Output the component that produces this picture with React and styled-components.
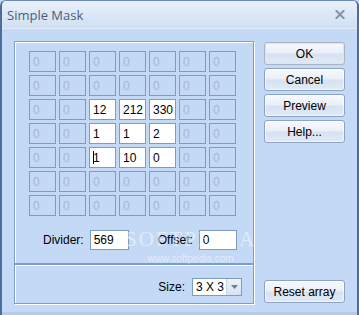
import React from 'react';
import styled, { createGlobalStyle } from 'styled-components';

const GlobalStyle = createGlobalStyle`
  html, body {
    margin: 0;
    padding: 0;
    background: #c3d9f6;
    font-family: "Liberation Sans", Arial, sans-serif;
  }
`;

const Window = styled.div`
  position: relative;
  width: 359px;
  height: 315px;
  box-sizing: border-box;
  background: #c3d9f6;
  border-left: 2px solid #4d6d9c;
  border-right: 2px solid #4d6d9c;
  border-top: 1px solid #6d8bb6;
  border-radius: 6px 6px 0 0;
  overflow: hidden;
  display: flex;
  flex-direction: column;
`;

const TitleBar = styled.div`
  height: 27px;
  flex: none;
  display: flex;
  align-items: center;
  justify-content: space-between;
  padding: 0 12px 0 5px;
  background: linear-gradient(#eaf1fa, #dde8f7 45%, #d1e0f4);
  border-bottom: 1px solid #e2ecf9;
`;

const Title = styled.span`
  font-family: "Open Sans", "Noto Sans", sans-serif;
  font-size: 13px;
  color: #4a5d78;
  padding-top: 1px;
`;

const Body = styled.div`
  display: flex;
  padding: 12px 0 8px 12px;
  border-bottom: 3px solid #b5cbe9;
`;

const LeftColumn = styled.div`
  width: 240px;
  display: flex;
  flex-direction: column;
`;

const GroupBox = styled.div`
  box-sizing: border-box;
  height: ${(p) => p.$height}px;
  border: 1px solid #7f9ccb;
  box-shadow: inset 1px 1px 0 #ffffff, 1px 1px 0 #ffffff;
`;

const CellGrid = styled.div`
  display: grid;
  grid-template-columns: repeat(7, 27px);
  grid-auto-rows: 21px;
  column-gap: 3px;
  row-gap: 3px;
  padding: 9px 0 0 14px;
`;

const Cell = styled.div`
  box-sizing: border-box;
  display: flex;
  align-items: center;
  padding-left: 3px;
  font-size: 12px;
  border: 1px solid ${(p) => (p.$active ? '#7f9db9' : '#7b9bd0')};
  background: ${(p) => (p.$active ? '#ffffff' : 'transparent')};
  color: ${(p) => (p.$active ? '#000000' : '#a8b7cc')};
`;

const Caret = styled.span`
  display: inline-block;
  width: 1px;
  height: 13px;
  background: #000;
  margin-right: -1px;
`;

const FieldRow = styled.div`
  display: flex;
  align-items: center;
  padding: 14px 0 0 28px;
`;

const FieldLabel = styled.span`
  font-size: 12px;
  color: #000;
  margin-left: ${(p) => p.$before || 0}px;
  margin-right: ${(p) => p.$after || 0}px;
`;

const TextBox = styled.div`
  box-sizing: border-box;
  width: ${(p) => p.$width}px;
  height: 20px;
  display: flex;
  align-items: center;
  padding-left: 3px;
  background: #fff;
  border: 1px solid #7f9db9;
  font-size: 12px;
  color: #000;
`;

const SizeRow = styled.div`
  display: flex;
  align-items: center;
  justify-content: flex-end;
  gap: 7px;
  padding: 13px 11px 0 0;
`;

const Select = styled.div`
  box-sizing: border-box;
  width: 50px;
  height: 18px;
  display: flex;
  background: #fff;
  border: 1px solid #7f9db9;
  font-size: 12px;
`;

const SelectValue = styled.span`
  flex: 1;
  display: flex;
  align-items: center;
  padding-left: 3px;
`;

const SelectArrow = styled.span`
  width: 14px;
  display: flex;
  align-items: center;
  justify-content: center;
  background: linear-gradient(#eef3fa, #d6e2f2);
  border-left: 1px solid #c6d5ea;
`;

const RightColumn = styled.div`
  width: 81px;
  margin-left: 10px;
  display: flex;
  flex-direction: column;
  justify-content: space-between;
  padding: 1px 0 1px;
`;

const ButtonStack = styled.div`
  display: flex;
  flex-direction: column;
  gap: 3px;
`;

const Button = styled.div`
  box-sizing: border-box;
  height: 23px;
  display: flex;
  align-items: center;
  justify-content: center;
  font-size: 12px;
  color: #000;
  border: 1px solid ${(p) => (p.$primary ? '#a9b5c4' : '#8da3c3')};
  border-radius: 3px;
  background: linear-gradient(#f7f9fd, #e9eff8 48%, #d6e2f1 52%, #e1eaf6);
  box-shadow: inset 0 0 0 1px ${(p) => (p.$primary ? '#f5e7aa' : 'rgba(255,255,255,0.6)')};
`;

const Watermark = styled.div`
  position: absolute;
  left: 123px;
  top: 226px;
  display: flex;
  flex-direction: column;
  align-items: center;
  pointer-events: none;
  color: rgba(255, 255, 255, 0.5);
`;

const WatermarkBig = styled.span`
  font-family: "Liberation Serif", serif;
  font-size: 21px;
  letter-spacing: 2px;
`;

const WatermarkSmall = styled.span`
  font-family: "Liberation Sans", sans-serif;
  font-size: 10px;
  margin-top: 1px;
`;

const values = {
  '2-2': '12', '2-3': '212', '2-4': '330',
  '3-2': '1', '3-3': '1', '3-4': '2',
  '4-2': '1', '4-3': '10', '4-4': '0',
};

function CloseIcon() {
  return (
    <svg width="10" height="9" viewBox="0 0 10 9">
      <path d="M1.5 1 L8.5 8 M8.5 1 L1.5 8" stroke="#8393a8" strokeWidth="2" strokeLinecap="square" />
    </svg>
  );
}

export default function App() {
  const cells = [];
  for (let r = 0; r < 7; r++) {
    for (let c = 0; c < 7; c++) {
      const key = `${r}-${c}`;
      const v = values[key];
      cells.push(
        <Cell key={key} $active={v !== undefined}>
          {key === '4-2' && <Caret />}
          {v !== undefined ? v : '0'}
        </Cell>
      );
    }
  }

  return (
    <Window>
      <GlobalStyle />
      <TitleBar>
        <Title>Simple Mask</Title>
        <CloseIcon />
      </TitleBar>
      <Body>
        <LeftColumn>
          <GroupBox $height={223}>
            <CellGrid>{cells}</CellGrid>
            <FieldRow>
              <FieldLabel $after={6}>Divider:</FieldLabel>
              <TextBox $width={39}>569</TextBox>
              <FieldLabel $before={29} $after={6}>Offset:</FieldLabel>
              <TextBox $width={38}>0</TextBox>
            </FieldRow>
          </GroupBox>
          <GroupBox $height={40}>
            <SizeRow>
              <FieldLabel>Size:</FieldLabel>
              <Select>
                <SelectValue>3 X 3</SelectValue>
                <SelectArrow>
                  <svg width="7" height="4" viewBox="0 0 7 4">
                    <path d="M0 0 H7 L3.5 4 Z" fill="#6d7f99" />
                  </svg>
                </SelectArrow>
              </Select>
            </SizeRow>
          </GroupBox>
        </LeftColumn>
        <RightColumn>
          <ButtonStack>
            <Button $primary>OK</Button>
            <Button>Cancel</Button>
            <Button>Preview</Button>
            <Button>Help...</Button>
          </ButtonStack>
          <Button>Reset array</Button>
        </RightColumn>
      </Body>
      <Watermark>
        <WatermarkBig>SOFTPEDIA</WatermarkBig>
        <WatermarkSmall>www.softpedia.com</WatermarkSmall>
      </Watermark>
    </Window>
  );
}
